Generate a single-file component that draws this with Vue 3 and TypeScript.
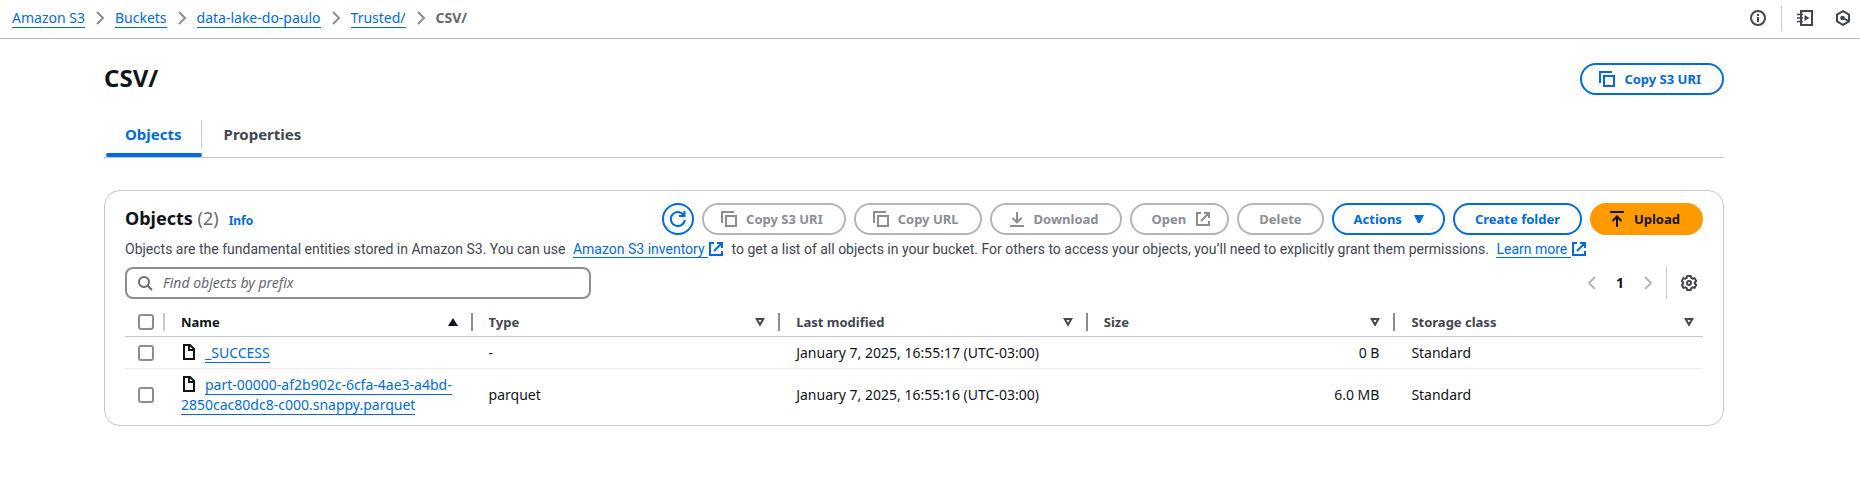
<script setup lang="ts">
import { ref } from 'vue'

interface S3Object {
  name: string
  type: string
  modified: string
  size: string
  storage: string
}

const crumbs: string[] = ['Amazon S3', 'Buckets', 'data-lake-do-paulo', 'Trusted/']
const columns: string[] = ['Name', 'Type', 'Last modified', 'Size', 'Storage class']
const objects: S3Object[] = [
  { name: '_SUCCESS', type: '-', modified: 'January 7, 2025, 16:55:17 (UTC-03:00)', size: '0 B', storage: 'Standard' },
  {
    name: 'part-00000-af2b902c-6cfa-4ae3-a4bd-2850cac80dc8-c000.snappy.parquet',
    type: 'parquet',
    modified: 'January 7, 2025, 16:55:16 (UTC-03:00)',
    size: '6.0 MB',
    storage: 'Standard',
  },
]
const prefix = ref('')
const selected = ref<string[]>([])
</script>

<template>
  <div class="page">
    <header class="topbar">
      <nav aria-label="Breadcrumbs">
        <ol class="crumbs">
          <li v-for="crumb in crumbs" :key="crumb">
            <a href="#" class="link">{{ crumb }}</a>
            <svg class="icon chevron" viewBox="0 0 16 16"><path d="M5 2l6 6-6 6" /></svg>
          </li>
          <li class="current" aria-current="page">CSV/</li>
        </ol>
      </nav>
      <div class="tools">
        <button type="button" class="tool" aria-label="Info">
          <svg class="icon" viewBox="0 0 16 16"><circle cx="8" cy="8" r="7" /><path d="M8 7v5M8 4v2" /></svg>
        </button>
        <span class="rule"></span>
        <button type="button" class="tool" aria-label="Tutorials">
          <svg class="icon" viewBox="0 0 16 16">
            <path d="M4 15V1h11v14H3" />
            <path class="thin" d="M0 4.500h6M0 8h6M0 11.500h6" />
            <path class="solid" d="M7.500 5l5 3-5 3z" />
          </svg>
        </button>
        <button type="button" class="tool" aria-label="Diagnostics">
          <svg class="icon" viewBox="0 0 16 16">
            <path d="M8 1.200l6 3.400v6.800l-6 3.400-6-3.400V4.600z" />
            <circle class="solid" cx="7.500" cy="8" r="2.300" /><path d="M8 8l5.500 3.200" />
          </svg>
        </button>
      </div>
    </header>

    <main class="content">
      <div class="title-row">
        <h1>CSV/</h1>
        <button type="button" class="btn lead">
          <svg class="icon" viewBox="0 0 16 16"><path d="M1 12V1h12M5 5h10v10H5z" /></svg>Copy S3 URI
        </button>
      </div>

      <div class="tabs" role="tablist">
        <button type="button" class="tab active" role="tab" aria-selected="true">Objects</button>
        <button type="button" class="tab" role="tab" aria-selected="false">Properties</button>
      </div>

      <section class="card">
        <div class="card-head">
          <div class="heading">
            <h2>Objects <span class="count">(2)</span></h2>
            <a href="#" class="info">Info</a>
          </div>
          <div class="actions">
            <button type="button" class="btn round" aria-label="Refresh">
              <svg class="icon" viewBox="0 0 16 16"><path d="M14.800 9A7 7 0 1 1 13.500 3.800M9 5h5.500V0" /></svg>
            </button>
            <button type="button" class="btn lead" disabled>
              <svg class="icon" viewBox="0 0 16 16"><path d="M1 12V1h12M5 5h10v10H5z" /></svg>Copy S3 URI
            </button>
            <button type="button" class="btn lead" disabled>
              <svg class="icon" viewBox="0 0 16 16"><path d="M1 12V1h12M5 5h10v10H5z" /></svg>Copy URL
            </button>
            <button type="button" class="btn lead" disabled>
              <svg class="icon" viewBox="0 0 16 16"><path d="M8 1v10M3.500 7L8 11.300 12.500 7M1 15h14" /></svg>Download
            </button>
            <button type="button" class="btn trail" disabled>
              Open<svg class="icon" viewBox="0 0 16 16"><path d="M9 2h5v5M6 10l8-8M14 10v4H2V2h4" /></svg>
            </button>
            <button type="button" class="btn" disabled>Delete</button>
            <button type="button" class="btn trail">
              Actions<svg class="icon" viewBox="0 0 16 16"><path class="solid" d="M3 4h10l-4 8H7z" /></svg>
            </button>
            <button type="button" class="btn">Create folder</button>
            <button type="button" class="btn lead primary">
              <svg class="icon" viewBox="0 0 16 16"><path d="M8 16V6M3.500 10L8 5.500 12.500 10M1 1h14" /></svg>Upload
            </button>
          </div>
        </div>

        <p class="description">
          Objects are the fundamental entities stored in Amazon S3. You can use
          <a href="#" class="ext"><span class="link">Amazon S3 inventory&nbsp;</span><svg class="icon" viewBox="0 0 16 16"><path d="M9 2h5v5M6 10l8-8M14 10v4H2V2h4" /></svg></a>
          to get a list of all objects in your bucket. For others to access your objects, you’ll need to explicitly grant them permissions.
          <a href="#" class="ext"><span class="link">Learn more&nbsp;</span><svg class="icon" viewBox="0 0 16 16"><path d="M9 2h5v5M6 10l8-8M14 10v4H2V2h4" /></svg></a>
        </p>

        <div class="filter-row">
          <label class="search">
            <svg class="icon" viewBox="0 0 16 16"><circle cx="7" cy="7" r="5" /><path d="M10.500 10.500L15 15" /></svg>
            <input v-model="prefix" type="text" placeholder="Find objects by prefix" aria-label="Find objects by prefix" />
          </label>
          <nav class="pager" aria-label="Pagination">
            <button type="button" class="tool" aria-label="Previous page" disabled>
              <svg class="icon" viewBox="0 0 16 16"><path d="M11 2L5 8l6 6" /></svg>
            </button>
            <button type="button" class="number" aria-current="page">1</button>
            <button type="button" class="tool" aria-label="Next page" disabled>
              <svg class="icon" viewBox="0 0 16 16"><path d="M5 2l6 6-6 6" /></svg>
            </button>
            <span class="rule tall"></span>
            <button type="button" class="tool" aria-label="Preferences">
              <svg class="icon" viewBox="0 0 16 16">
                <path
                  stroke-linejoin="round"
                  d="M6.200 1h3.600l.5 1.900 1.300.8 1.900-.6 1.700 3-1.400 1.300v1.200l1.400 1.300-1.700 3-1.900-.6-1.300.8-.5 1.900H6.200l-.5-1.900-1.300-.8-1.900.6-1.700-3 1.400-1.300V7.400L.8 6.100l1.700-3 1.900.6 1.300-.8z"
                />
                <circle cx="8" cy="8" r="2" />
              </svg>
            </button>
          </nav>
        </div>

        <table>
          <colgroup>
            <col class="pick-col" />
            <col v-for="column in columns" :key="column" />
          </colgroup>
          <thead>
            <tr>
              <th class="pick" scope="col"><input type="checkbox" aria-label="Select all objects" /></th>
              <th v-for="(column, i) in columns" :key="column" scope="col" :class="{ sorted: i === 0 }">
                <div class="th-inner">
                  {{ column }}
                  <button type="button" class="sort" :aria-label="'Sort by ' + column">
                    <svg v-if="i === 0" viewBox="0 0 10 10"><path class="solid" d="M0 9h10L5 1z" /></svg>
                    <svg v-else viewBox="0 0 10 10"><path d="M1.700 2h6.600L5 7.800z" /></svg>
                  </button>
                </div>
              </th>
            </tr>
          </thead>
          <tbody>
            <tr v-for="object in objects" :key="object.name">
              <td class="pick">
                <input v-model="selected" type="checkbox" :value="object.name" :aria-label="'Select ' + object.name" />
              </td>
              <td>
                <svg class="icon file" viewBox="0 0 16 16"><path d="M3 1h6l4 4v10H3zM8 1v5h5" /></svg>
                <a href="#" class="link">{{ object.name }}</a>
              </td>
              <td>{{ object.type }}</td>
              <td>{{ object.modified }}</td>
              <td class="size">{{ object.size }}</td>
              <td>{{ object.storage }}</td>
            </tr>
          </tbody>
        </table>
      </section>
    </main>
  </div>
</template>

<style>
body {
  margin: 0;
  background: #fff;
}
</style>

<style scoped>
* {
  box-sizing: border-box;
}
.page {
  font: 14px/20px "Noto Sans", "Open Sans", sans-serif;
  color: #0f141a;
}
button {
  font: inherit;
  color: inherit;
  background: none;
  border: 0;
  padding: 0;
}
.icon {
  width: 16px;
  height: 16px;
  flex: none;
  fill: none;
  stroke: currentColor;
  stroke-width: 2;
}
.icon .solid,
.sort .solid {
  fill: currentColor;
  stroke: none;
}
.icon .thin {
  stroke-width: 1.500;
}
.link {
  color: #006ce0;
  text-decoration: none;
  border-bottom: 1px solid #006ce0;
}
.topbar {
  display: flex;
  justify-content: space-between;
  align-items: center;
  height: 39px;
  padding: 0 9px 2px 12px;
  border-bottom: 1px solid #b4b4bb;
}
.crumbs {
  display: flex;
  list-style: none;
  margin: 0;
  padding: 0;
}
.crumbs li {
  display: flex;
  align-items: center;
}
.crumbs .link {
  line-height: 18px;
}
.crumbs .current {
  font-weight: 700;
  color: #656871;
}
.chevron {
  margin: 0 7px;
  color: #8c8c94;
}
.tools {
  display: flex;
  align-items: center;
  color: #424650;
}
.tool {
  display: flex;
}
.tools .tool + .tool {
  margin-left: 22px;
}
.rule {
  width: 1px;
  height: 25px;
  margin: 0 15px;
  background: #c6c6cd;
}
.content {
  margin: 24px 136px 0 104px;
}
.title-row {
  display: flex;
  justify-content: space-between;
  align-items: center;
}
h1 {
  margin: 0;
  padding-bottom: 2px;
  font-size: 24px;
  line-height: 30px;
}
.btn {
  display: flex;
  align-items: center;
  justify-content: center;
  gap: 9px;
  height: 32px;
  padding: 0 20px;
  border: 2px solid #006ce0;
  border-radius: 16px;
  font-size: 13px;
  font-weight: 700;
  color: #006ce0;
  white-space: nowrap;
}
.btn.lead {
  padding: 0 21px 0 17px;
}
.btn.trail {
  padding-right: 16px;
}
.btn.round {
  width: 32px;
  padding: 0;
}
.btn:disabled {
  border-color: #b4b4bb;
  color: #8c8c94;
}
.btn.primary {
  border-color: #ff9900;
  background: #ff9900;
  color: #0f141a;
}
.tabs {
  display: flex;
  margin-top: 17px;
  border-bottom: 1px solid #c6c6cd;
}
.tab {
  position: relative;
  height: 45px;
  padding: 0 22px 2px;
  font-size: 15px;
  font-weight: 700;
  color: #424650;
}
.tab.active {
  padding: 0 20px 2px 21px;
  color: #006ce0;
  background: linear-gradient(#c6c6cd, #c6c6cd) right 8px / 1px 28px no-repeat;
}
.tab.active::after {
  content: "";
  position: absolute;
  left: 2px;
  right: 0;
  bottom: 0;
  height: 4px;
  border-radius: 2px;
  background: #006ce0;
}
.card {
  margin-top: 32px;
  padding: 12px 20px 5px;
  border: 1px solid #c6c6cd;
  border-radius: 16px;
}
.card-head {
  display: flex;
  justify-content: space-between;
  align-items: center;
}
.heading {
  display: flex;
  align-items: baseline;
  gap: 10px;
  padding-bottom: 2px;
}
h2 {
  margin: 0;
  font-size: 18px;
  line-height: 24px;
}
.count {
  font-weight: 400;
  color: #656871;
}
.info {
  font-size: 12px;
  font-weight: 700;
  color: #006ce0;
  text-decoration: none;
}
.actions {
  display: flex;
  gap: 8px;
}
.description {
  margin: 4px 0 8px;
  font-family: Roboto, "Noto Sans", sans-serif;
  color: #424650;
}
.ext {
  margin: 0 4px;
  color: #006ce0;
  text-decoration: none;
}
.ext .icon {
  vertical-align: -3px;
}
.filter-row {
  display: flex;
  justify-content: space-between;
  align-items: center;
}
.search {
  display: flex;
  align-items: center;
  gap: 10px;
  width: 466px;
  height: 32px;
  padding: 0 10px;
  border: 2px solid #8c8c94;
  border-radius: 8px;
  color: #656871;
}
.search input {
  flex: 1;
  min-width: 0;
  padding: 0;
  border: 0;
  outline: 0;
  background: none;
  font: inherit;
  color: #0f141a;
}
.search input::placeholder {
  color: #656871;
  font-style: italic;
  opacity: 1;
}
.pager {
  display: flex;
  align-items: center;
  padding-right: 6px;
  color: #424650;
}
.pager .tool:disabled {
  color: #b4b4bb;
}
.number {
  width: 40px;
  font-weight: 700;
  color: #0f141a;
}
.rule.tall {
  height: 32px;
  margin: 0 14px 0 10px;
}
table {
  width: 100%;
  margin-top: 8px;
  table-layout: fixed;
  border-collapse: separate;
  border-spacing: 0;
}
.pick-col {
  width: 40px;
}
th,
td {
  padding: 6px 16px 5px;
  text-align: left;
}
th {
  height: 30px;
  padding: 4px 15px 4px 16px;
  border-bottom: 1px solid #c6c6cd;
  font-size: 13px;
  color: #424650;
  background: linear-gradient(#8c8c94, #8c8c94) right 6px / 2px 18px no-repeat;
}
th.sorted {
  color: #0f141a;
}
th:last-child {
  padding-right: 9px;
  background: none;
}
th.pick {
  background-image: linear-gradient(#c6c6cd, #c6c6cd);
}
tbody tr:not(:last-child) td {
  border-bottom: 1px solid #ebebf0;
}
.th-inner {
  display: flex;
  justify-content: space-between;
  align-items: center;
}
.sort {
  display: flex;
}
.sort svg {
  width: 10px;
  height: 10px;
  fill: none;
  stroke: currentColor;
  stroke-width: 2;
}
th.pick,
td.pick {
  padding: 0 0 0 13px;
}
.pick input {
  display: block;
  appearance: none;
  width: 16px;
  height: 16px;
  margin: 0;
  border: 2px solid #8c8c94;
  border-radius: 3px;
  background: #fff;
}
.pick input:checked {
  border-color: #006ce0;
  background: #006ce0;
}
.file {
  margin-right: 4px;
  vertical-align: -2px;
}
td .file + .link {
  margin-left: 4px;
}
td.size {
  text-align: right;
}
td .link {
  overflow-wrap: anywhere;
}
</style>
